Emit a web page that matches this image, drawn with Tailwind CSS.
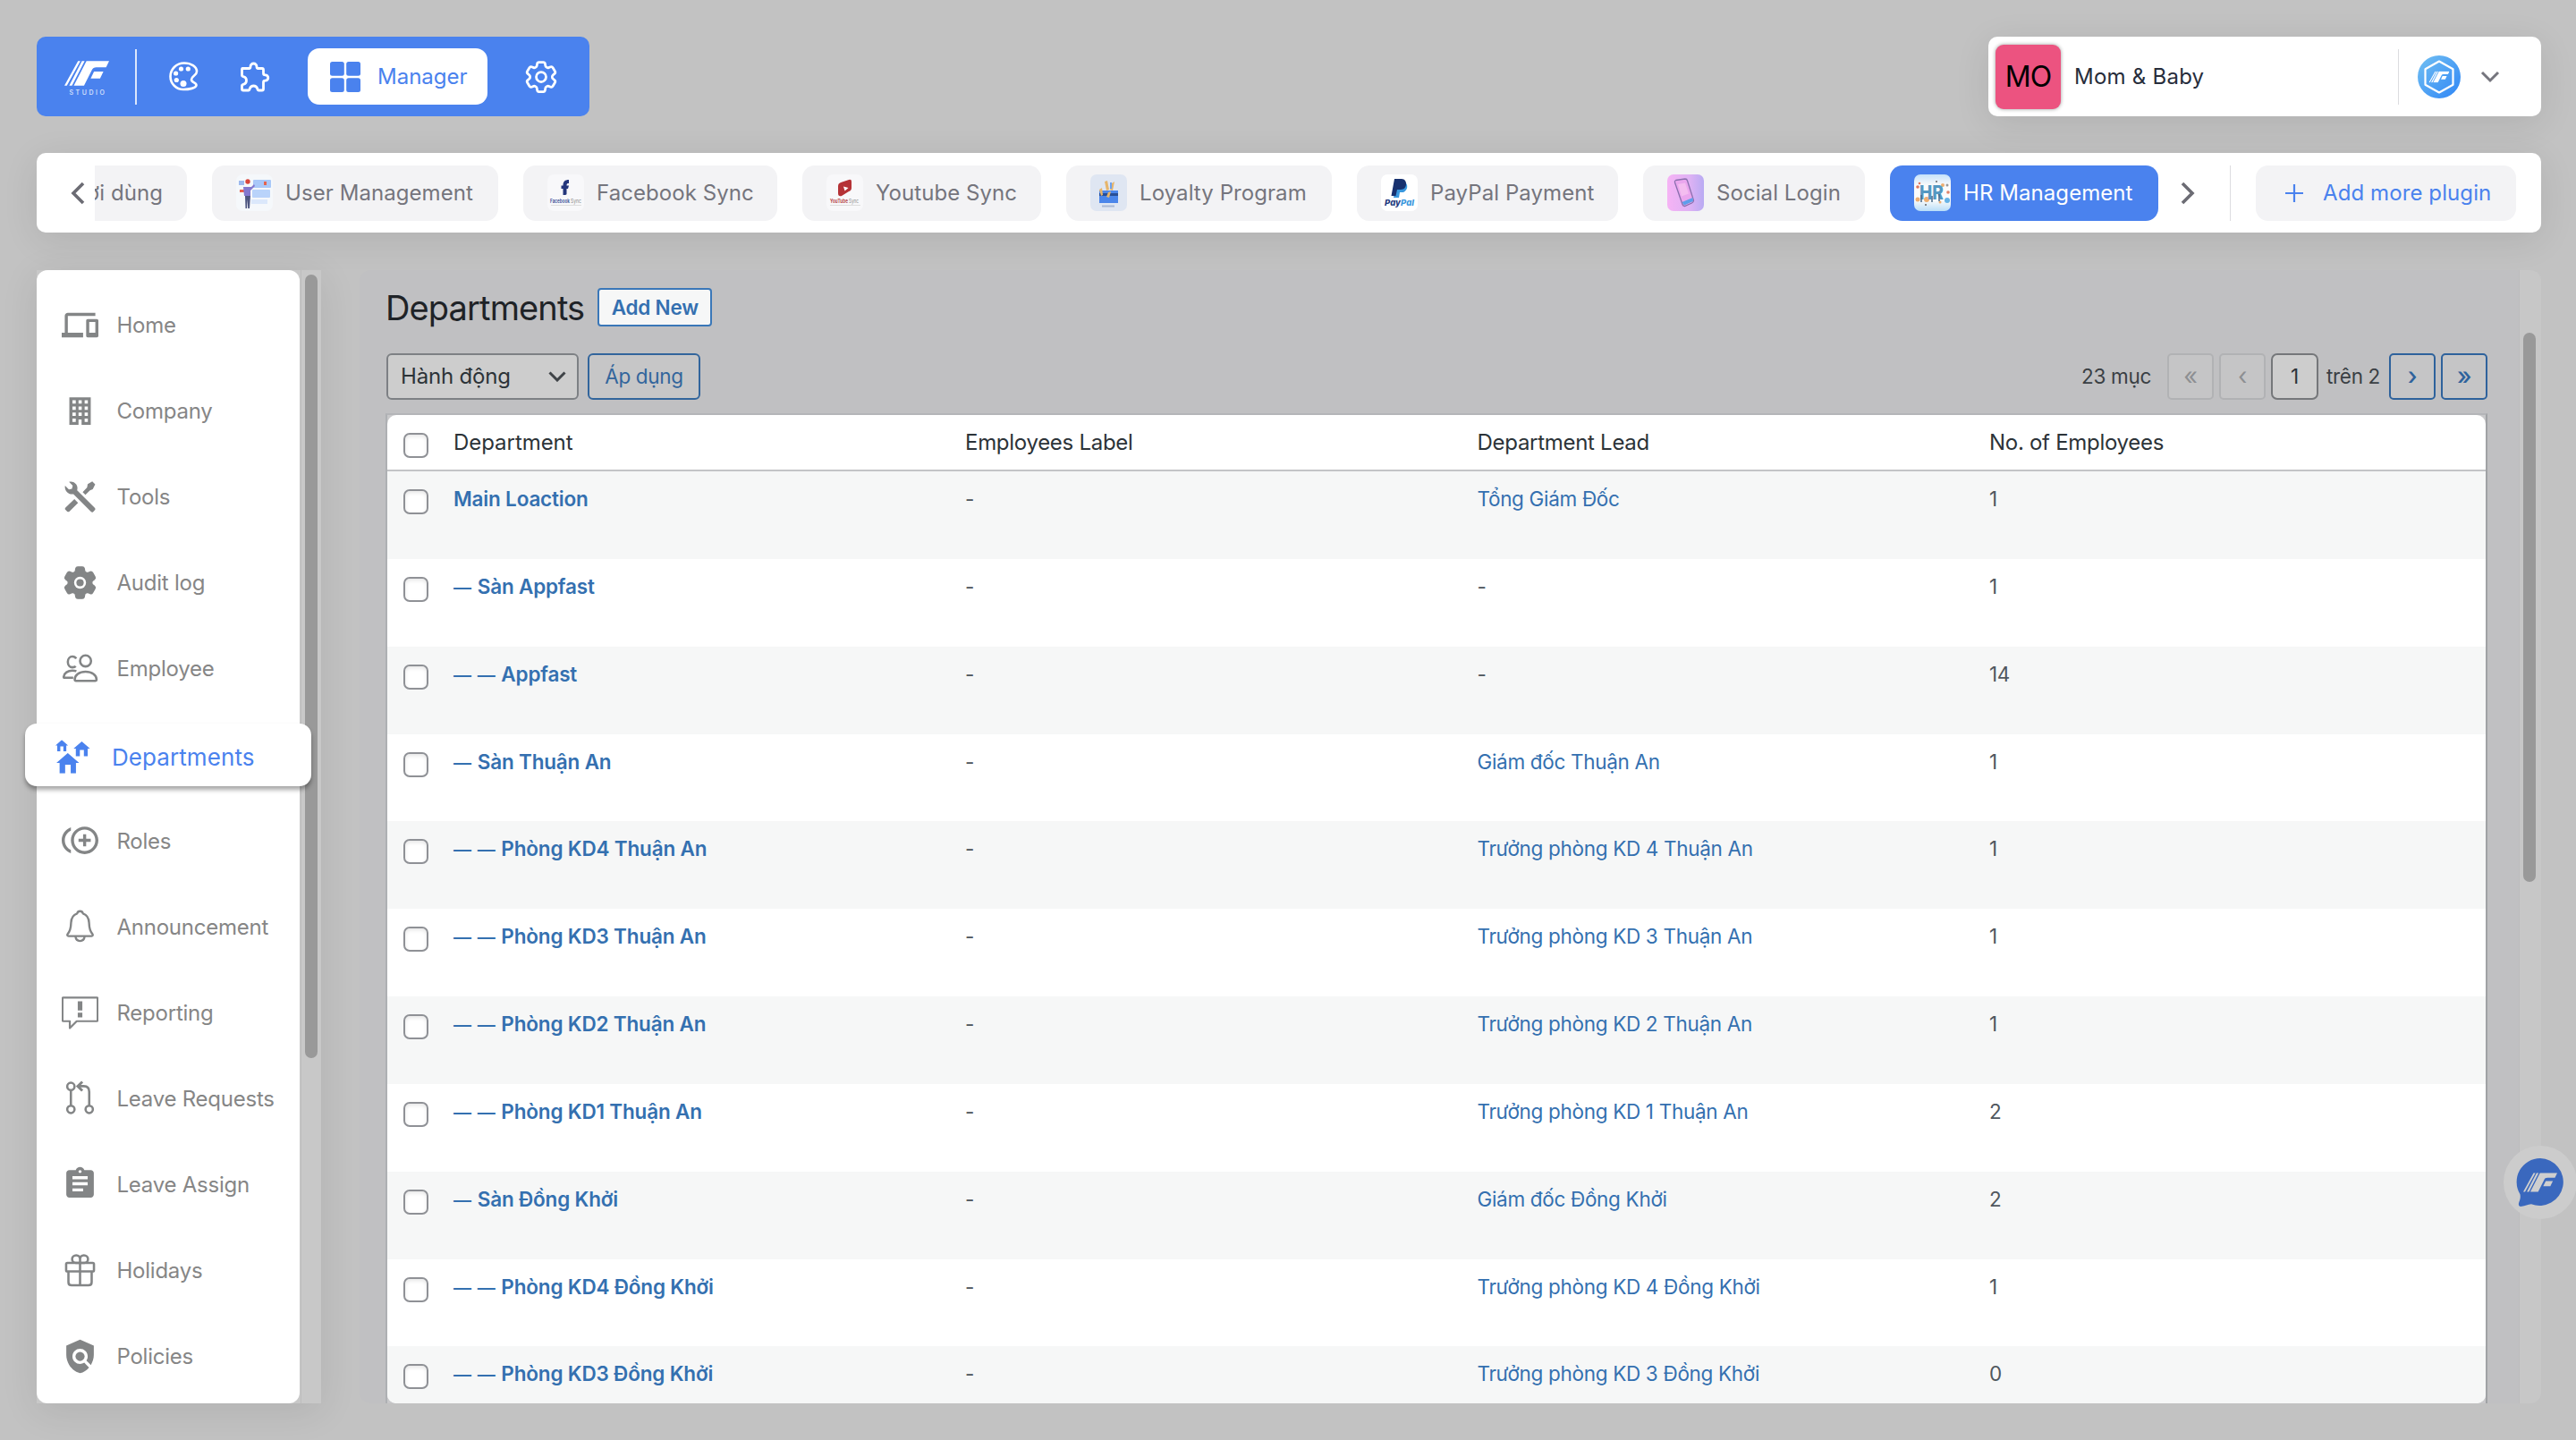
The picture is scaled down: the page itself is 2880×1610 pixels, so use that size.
<!DOCTYPE html>
<html lang="vi">
<head>
<meta charset="utf-8">
<title>Departments</title>
<script src="https://cdn.jsdelivr.net/npm/@tailwindcss/browser@4"></script>
</head>
<body class="relative h-[1610px] w-[2880px] overflow-hidden bg-[#c2c2c2] font-['Inter','Noto_Sans',sans-serif] text-[24px] leading-none text-[#75757d]">

<svg class="hidden">
  <symbol id="logo" viewBox="65 51 148 82">
    <path d="M110 51h8L73 133h-8zM123 51h9L90 133h-9z"/>
    <path d="M138 51h75l-10 21h-32c-8 0-12 3-15 9l-26 52H96z"/>
    <path d="M163 86h31l-11 23h-31z"/>
  </symbol>
  <symbol id="cog" viewBox="0 0 24 24">
    <path d="M9.594 3.94c.09-.542.56-.94 1.11-.94h2.593c.55 0 1.02.398 1.11.94l.213 1.281c.063.374.313.686.645.87.074.04.147.083.22.127.325.196.72.257 1.075.124l1.217-.456a1.125 1.125 0 0 1 1.37.49l1.296 2.247a1.125 1.125 0 0 1-.26 1.431l-1.003.827c-.293.241-.438.613-.43.992a7.723 7.723 0 0 1 0 .255c-.008.378.137.75.43.991l1.004.827c.424.35.534.955.26 1.43l-1.298 2.247a1.125 1.125 0 0 1-1.369.491l-1.217-.456c-.355-.133-.75-.072-1.076.124a6.47 6.47 0 0 1-.22.128c-.331.183-.581.495-.644.869l-.213 1.281c-.09.543-.56.94-1.11.94h-2.594c-.55 0-1.019-.398-1.11-.94l-.213-1.281c-.062-.374-.312-.686-.644-.87a6.52 6.52 0 0 1-.22-.127c-.325-.196-.72-.257-1.076-.124l-1.217.456a1.125 1.125 0 0 1-1.369-.49l-1.297-2.247a1.125 1.125 0 0 1 .26-1.431l1.004-.827c.292-.24.437-.613.43-.991a6.932 6.932 0 0 1 0-.255c.007-.38-.138-.751-.43-.992l-1.004-.827a1.125 1.125 0 0 1-.26-1.43l1.297-2.247a1.125 1.125 0 0 1 1.37-.491l1.216.456c.356.133.751.072 1.076-.124.072-.044.146-.086.22-.128.332-.183.582-.495.644-.869l.214-1.28Z"/>
  </symbol>
  <symbol id="house" viewBox="0 0 78 70"><path d="M39 0 78 34H67V70H49V40H30V70H11V34H0z"/></symbol>
</svg>

<div class="flex h-[1569px] flex-col pt-[41px] pr-[39px] pl-[41px]">

  <!-- Top bar -->
  <header class="flex h-[89px] flex-none items-center justify-between">
    <nav class="flex h-[89px] w-[618px] items-center rounded-[10px] bg-[#4a82ee] text-white">
      <div class="ml-[31px] flex w-[50px] flex-col items-center pt-[4px]">
        <svg class="h-[28px] w-[50px]" fill="#fff"><use href="#logo"/></svg>
        <span class="mt-[4px] pl-[3px] text-[7px] leading-[7px] font-medium tracking-[2.6px] text-white/80">STUDIO</span>
      </div>
      <div class="ml-[29px] h-[62px] w-[2px] bg-white/80"></div>
      <svg class="ml-[35px] h-[36px] w-[36px] flex-none" viewBox="0 0 36 36" fill="none" stroke="#fff" stroke-width="2.6">
        <path d="M18 2.500C9 2.500 2.500 9.500 2.500 17.500s6.500 14.500 14.500 14.500c6.500 0 14-1.500 14.500-4.500.5-3-5.500-3-5.500-6.500 0-4 6-4.500 6-9C32 6.500 25.500 2.500 18 2.500z"/>
        <g fill="#fff" stroke="none"><circle cx="14.500" cy="9" r="2.600"/><circle cx="22.300" cy="9" r="2.600"/><circle cx="8.600" cy="14" r="2.600"/><circle cx="9.300" cy="21.500" r="2.600"/><circle cx="17" cy="25.500" r="3.500"/></g>
      </svg>
      <svg class="ml-[42px] h-[36px] w-[36px] flex-none" viewBox="0 0 36 36" fill="none" stroke="#fff" stroke-width="2.800" stroke-linejoin="round">
        <path d="M5 8.500h7.500c1.500 0 1.500-1 1.500-2 0-2 1.500-3.500 3.500-3.500S21 4.500 21 6.500c0 1 .2 2 1.500 2H27c1 0 1.500.5 1.500 1.500v4c0 1.500 1 1.800 2 1.800 2 0 3.300 1.500 3.300 3.200s-1.300 3.200-3.300 3.200c-1 0-2 .3-2 1.800v7.500c0 1-.5 1.500-1.500 1.500h-4c-1 0-1-1-1.300-2-.7-2-2.200-3-4.200-3s-3.500 1-4.200 3c-.3 1-.3 2-1.300 2H6c-1 0-1.500-.5-1.500-1.500v-4c0-1 1-1 2-1.300 2-.700 3-2.200 3-4.200s-1-3.500-3-4.200c-1-.300-2-.3-2-1.300V10c0-1 .2-1.500.5-1.500z"/>
      </svg>
      <div class="ml-[42px] flex h-[63px] w-[201px] items-center rounded-[13px] bg-white pl-[25px] text-[#4a82ee]">
        <svg class="h-[34px] w-[34px]" viewBox="0 0 34 34" fill="#4a82ee"><rect width="15.800" height="15.800" rx="2.500"/><rect x="18.200" width="15.800" height="15.800" rx="2.500"/><rect y="18.200" width="15.800" height="15.800" rx="2.500"/><rect x="18.200" y="18.200" width="15.800" height="15.800" rx="2.500"/></svg>
        <span class="ml-[19px] pt-px">Manager</span>
      </div>
      <svg class="ml-[38px] h-[44px] w-[44px] flex-none" viewBox="0 0 24 24" fill="none" stroke="#fff" stroke-width="1.500"><use href="#cog"/><circle cx="12" cy="12" r="3"/></svg>
    </nav>

    <div class="flex h-[89px] w-[618px] items-center rounded-[10px] bg-white pl-[8px] shadow-[0_8px_40px_rgba(0,0,0,0.09)]">
      <div class="flex h-[72px] w-[73px] items-center justify-center rounded-[9px] bg-[#ec5380] text-[32px] tracking-[-0.03em] text-black shadow-[0_0_4px_rgba(0,0,0,0.4)]">MO</div>
      <span class="ml-[15px] pt-px tracking-[0.01em] text-[#272d3b]">Mom &amp; Baby</span>
      <div class="ml-auto h-[62px] w-px bg-[#dcdce0]"></div>
      <svg class="ml-[21px] h-[48px] w-[48px]" viewBox="0 0 48 48">
        <defs><linearGradient id="av" x1="0" y1="0" x2="1" y2="1"><stop offset="0" stop-color="#72c0f2"/><stop offset="1" stop-color="#2f86f6"/></linearGradient></defs>
        <circle cx="24" cy="24" r="24" fill="url(#av)"/>
        <path d="M24 6.500 39.500 15.300V32.700L24 41.500 8.500 32.700V15.300z" fill="none" stroke="#fff" stroke-width="2.200" stroke-linejoin="round"/>
        <use href="#logo" x="12.500" y="17.500" width="23" height="13" fill="#fff"/>
      </svg>
      <svg class="mr-[46px] ml-[22px] h-[14px] w-[22px]" viewBox="0 0 22 14" fill="none" stroke="#75757d" stroke-width="3"><path d="m2 2 9 9 9-9"/></svg>
    </div>
  </header>

  <!-- Plugin bar -->
  <section class="mt-[41px] flex h-[89px] w-[2800px] flex-none items-center rounded-[10px] bg-white shadow-[0_8px_40px_rgba(0,0,0,0.09)]">
    <svg class="ml-[38px] h-[26px] w-[16px] flex-none" viewBox="0 0 16 26" fill="none" stroke="#6c6c74" stroke-width="3.600"><path d="M14 2 3 13l11 11"/></svg>
    <div class="ml-[11px] flex h-[62px] w-[2307px] flex-none justify-end gap-[28px] overflow-hidden tracking-[0.003em]">
      <div class="flex flex-none items-center rounded-[14px] bg-[#f3f3f5] px-[27px]"><span class="pt-px whitespace-nowrap">Người dùng</span></div>
      <div class="flex w-[320px] flex-none items-center gap-[14px] rounded-[14px] bg-[#f3f3f5] pl-[27px]">
        <svg class="h-[41px] w-[41px] flex-none" viewBox="0 0 41 41"><rect width="41" height="41" rx="7" fill="#f5f8fb"/><rect x="19" y="6" width="20" height="9" rx="1" fill="#a9c8f8"/><rect x="18" y="17" width="20" height="9" rx="1" fill="#b9d3fa"/><rect x="17" y="28" width="18" height="5" fill="#dbe8fb"/><rect x="3" y="7" width="6" height="5" fill="#9db9ee"/><path d="M4 17h5v3H4z" fill="#e9604f"/><circle cx="13" cy="8" r="2.700" fill="#d8453c"/><path d="M8 14h9l3-3 1 2-5 5v6H9z" fill="#8378cf"/><path d="M10 24h6l-1 14h-1.800l-.5-10L12 38h-1.500z" fill="#4d5580"/><path d="M31 8h3v4h-3z" fill="#e4644f"/></svg>
        <span class="pt-px whitespace-nowrap">User Management</span>
      </div>
      <div class="flex w-[284px] flex-none items-center gap-[14px] rounded-[14px] bg-[#f3f3f5] pl-[27px]">
        <svg class="h-[41px] w-[41px] flex-none" viewBox="0 0 41 41"><rect width="41" height="41" rx="7" fill="#f8f8fa"/><path d="M17.500 23v-7h-2v-3.500h2c0-4.500 2-6.500 6.500-6.500v4c-2 0-2.500.5-2.500 2.500h2.500l-1 3.500h-1.500v6q0 1-2 1t-2 0z" fill="#24367c"/><text x="3" y="32" font-size="6" font-weight="700" fill="#4a5aa0" textLength="22" lengthAdjust="spacingAndGlyphs">Facebook</text><text x="26" y="32" font-size="6" fill="#888" textLength="12" lengthAdjust="spacingAndGlyphs">Sync</text><path d="M4 34.500h34" stroke="#ddd"/></svg>
        <span class="pt-px whitespace-nowrap">Facebook Sync</span>
      </div>
      <div class="flex w-[267px] flex-none items-center gap-[14px] rounded-[14px] bg-[#f3f3f5] pl-[27px]">
        <svg class="h-[41px] w-[41px] flex-none" viewBox="0 0 41 41"><rect width="41" height="41" rx="7" fill="#f8f8fa"/><path d="M13 13q0-3 3-4l9-3q3-1 3 2v7q0 3-3 4l-8 5q-4 1-4-3z" fill="#b53236"/><path d="m19 13.500 5.500 1.500-4 3.500z" fill="#fff"/><text x="4" y="32" font-size="6" font-weight="700" fill="#b7494d" textLength="20" lengthAdjust="spacingAndGlyphs">YouTube</text><text x="25" y="32" font-size="6" fill="#888" textLength="11" lengthAdjust="spacingAndGlyphs">Sync</text><path d="M4 34.500h34" stroke="#ddd"/></svg>
        <span class="pt-px whitespace-nowrap">Youtube Sync</span>
      </div>
      <div class="flex w-[297px] flex-none items-center gap-[14px] rounded-[14px] bg-[#f3f3f5] pl-[27px]">
        <svg class="h-[41px] w-[41px] flex-none" viewBox="0 0 41 41"><rect width="41" height="41" rx="7" fill="#dfe6f2"/><path d="M10 18h21v14H10z" fill="#4b86ea"/><path d="M10 21h21v3H10z" fill="#294f96"/><path d="m16 8 3-1 2 10-3 1zM24 10l3-2-2 10-3-1zM10 17l3-2 1 8-2 1zM20 20l3-1-2 7-3-1z" fill="#e6b56c"/><path d="M22 9h2v7h-2z" fill="#6da1f0"/><path d="M13 35.500h14" stroke="#a9b9d5" stroke-width="2"/></svg>
        <span class="pt-px whitespace-nowrap">Loyalty Program</span>
      </div>
      <div class="flex w-[292px] flex-none items-center gap-[14px] rounded-[14px] bg-[#f3f3f5] pl-[27px]">
        <svg class="h-[41px] w-[41px] flex-none" viewBox="0 0 41 41"><rect width="41" height="41" rx="7" fill="#fff"/><path d="M17 9h9c5 1 4 9-1 11h-4l-1 6h-6z" fill="#3a97dd"/><path d="M15 5h8c7 0 7 12-1 12h-4l-1.500 7H11.500z" fill="#18316f"/><text x="4" y="35" font-size="9.500" font-weight="800" font-style="italic" fill="#243b80" textLength="18" lengthAdjust="spacingAndGlyphs">Pay</text><text x="22" y="35" font-size="9.500" font-weight="800" font-style="italic" fill="#3a97dd" textLength="15" lengthAdjust="spacingAndGlyphs">Pal</text></svg>
        <span class="pt-px whitespace-nowrap">PayPal Payment</span>
      </div>
      <div class="flex w-[248px] flex-none items-center gap-[14px] rounded-[14px] bg-[#f3f3f5] pl-[27px]">
        <svg class="h-[41px] w-[41px] flex-none" viewBox="0 0 41 41"><defs><linearGradient id="sl"><stop offset="0" stop-color="#f6b3f5"/><stop offset=".6" stop-color="#dfb2f4"/><stop offset="1" stop-color="#b9abf3"/></linearGradient></defs><rect width="41" height="41" rx="7" fill="url(#sl)"/><path d="m9.500 6.500 10.500-1.500q2 0 2.500 2l7 22q0 2-2 3l-8 3.500q-2 0-2.500-2L8.500 9q-.5-2 1-2.500z" fill="#eaa6ee" stroke="#8a6fae" stroke-width="1.300"/><path d="m16.500 31 12-5 .5 4-10 4.500z" fill="#5f9eea"/><path d="m12 11 8-1.500 4 12-8 3z" fill="#f4bdf0"/></svg>
        <span class="pt-px whitespace-nowrap">Social Login</span>
      </div>
      <div class="flex w-[300px] flex-none items-center gap-[14px] rounded-[14px] bg-[#4a82ee] pl-[27px] text-white">
        <svg class="h-[41px] w-[41px] flex-none" viewBox="0 0 41 41"><defs><linearGradient id="hr" x1="0" y1="0" x2="0" y2="1"><stop offset="0" stop-color="#c6e2fa"/><stop offset=".3" stop-color="#fbfbfb"/><stop offset=".7" stop-color="#fbfbfb"/><stop offset="1" stop-color="#b8ddf8"/></linearGradient></defs><rect width="41" height="41" rx="7" fill="url(#hr)"/><g fill="#ecae72"><circle cx="4" cy="28" r="2.500"/><circle cx="14" cy="28" r="3"/><circle cx="32" cy="12" r="2"/><circle cx="38" cy="20" r="1.800" fill="#e0846a"/><circle cx="4" cy="14" r="1.800" fill="#e0745a"/><circle cx="6" cy="10" r="1.300" fill="#e0745a"/><circle cx="29" cy="31" r="1.500"/><circle cx="37" cy="29" r="3" fill="#65b3e6"/><circle cx="25" cy="8" r="1" fill="#666"/><circle cx="13" cy="34" r="1" fill="#666"/><circle cx="37" cy="12" r="1.500" fill="#999"/></g><text x="6" y="28" font-size="21" font-weight="800" fill="#5498c2" textLength="27" lengthAdjust="spacingAndGlyphs">HR</text><path d="M8 23v8M20 24v7M28 22v8" stroke="#466a8a" stroke-width="1.500"/></svg>
        <span class="pt-px whitespace-nowrap">HR Management</span>
      </div>
    </div>
    <svg class="ml-[25px] h-[26px] w-[16px] flex-none" viewBox="0 0 16 26" fill="none" stroke="#6c6c74" stroke-width="3.600"><path d="m2 2 11 11L2 24"/></svg>
    <div class="ml-[39px] h-[62px] w-px bg-[#dcdce0]"></div>
    <div class="ml-[28px] flex h-[62px] w-[291px] items-center rounded-[14px] bg-[#f3f3f5] pl-[33px] text-[#4a82ee]">
      <svg class="h-[20px] w-[20px] flex-none" viewBox="0 0 20 20" stroke="#4a82ee" stroke-width="2.200"><path d="M0 10h20M10 0v20"/></svg>
      <span class="ml-[22px] pt-px whitespace-nowrap tracking-[0.004em]">Add more plugin</span>
    </div>
  </section>

  <div class="mt-[42px] flex h-[1267px] flex-none">

    <!-- Sidebar -->
    <aside class="flex h-[1267px] w-[318px] flex-none bg-[#c8c8c8] shadow-[0_8px_40px_rgba(0,0,0,0.09)]">
      <ul id="menu" class="relative z-10 flex h-[1267px] w-[294px] flex-none flex-col rounded-[12px] bg-white pt-[13px] tracking-[-0.01em] text-[#868686]"></ul>
      <div class="ml-px w-[23px] border-l border-[#bdbdbd] pt-[5px] pl-[4px]"><div class="h-[876px] w-[14px] rounded-full bg-[#999]"></div></div>
    </aside>

    <!-- Departments panel -->
    <main class="ml-[43px] flex h-[1267px] w-[2439px] flex-none overflow-hidden rounded-[12px] bg-[#c0c0c2]">
      <div class="w-[2414px] flex-none overflow-hidden pl-[29px] text-[22.5px] tracking-[-0.014em]">
        <div class="flex h-[83px] items-center">
          <h1 class="text-[38px] tracking-[-0.023em] text-[#1f2327]">Departments</h1>
          <button class="ml-[15px] h-[43px] w-[128px] rounded-[4px] border-2 border-[#3a77b8] bg-[#f6f7f7] pt-px text-[22.5px] font-semibold tracking-[-0.01em] text-[#3470b0]">Add New</button>
        </div>
        <div class="mt-[10px] flex h-[52px] w-[2350px] items-center text-[#3a3f44]">
          <div class="ml-px flex h-[52px] w-[215px] items-center justify-between rounded-[6px] border-2 border-[#7d8084] bg-[#cdcdcd] pr-[12px] pl-[14px] text-[24px] tracking-[-0.008em] text-[#2c3338]">Hành động<svg class="h-[12px] w-[20px]" viewBox="0 0 20 12" fill="none" stroke="#3f4347" stroke-width="3"><path d="m1.500 1.500 8.500 8.500 8.500-8.500"/></svg></div>
          <button class="ml-[10px] h-[52px] w-[126px] rounded-[6px] border-2 border-[#32659c] bg-[#c6c6c7] pt-px text-[22.500px] text-[#32659c]">Áp dụng</button>
          <span class="ml-auto pt-px">23 mục</span>
          <span class="ml-[18px] flex h-[52px] w-[52px] items-center justify-center rounded-[5px] border-2 border-[#b1b2b4] bg-[#c5c5c6] pb-[2px] text-[27px] text-[#8d8f92]">«</span>
          <span class="ml-[6px] flex h-[52px] w-[52px] items-center justify-center rounded-[5px] border-2 border-[#b1b2b4] bg-[#c5c5c6] pb-[2px] text-[27px] text-[#8d8f92]">‹</span>
          <span class="ml-[6px] flex h-[52px] w-[53px] items-center justify-center rounded-[7px] border-2 border-[#75777a] bg-[#cdcdcd] pt-px text-[#2c3338]">1</span>
          <span class="ml-[9px] w-[62px] pt-px whitespace-nowrap">trên 2</span>
          <span class="ml-[8px] flex h-[52px] w-[52px] items-center justify-center rounded-[5px] border-2 border-[#2e629c] bg-[#c5c5c6] pb-[2px] text-[27px] font-medium text-[#2e629c]">›</span>
          <span class="ml-[6px] flex h-[52px] w-[52px] items-center justify-center rounded-[5px] border-2 border-[#2e629c] bg-[#c5c5c6] pb-[2px] text-[27px] font-medium text-[#2e629c]">»</span>
        </div>
        <div class="mt-[15px] h-[1107px] w-[2350px] border-2 border-b-0 border-t-[#b4b5b8] border-r-[#a0a2a5] border-l-[#aeb0b3] bg-[#c8c8ca]">
          <div class="h-full overflow-hidden rounded-[10px] bg-white">
            <div class="flex h-[63px] border-b-2 border-[#c3c4c7] pl-[18px] text-[24px] tracking-[-0.012em] text-[#2c3338]">
              <div class="mt-[20px] h-[28px] w-[28px] flex-none rounded-[7px] border-2 border-[#8f9196] bg-white shadow-[inset_0_2px_4px_rgba(0,0,0,0.1)]"></div>
              <div class="ml-[28px] w-[572px] flex-none pt-[19px] tracking-[-0.002em]">Department</div>
              <div class="w-[572.5px] flex-none pt-[19px]">Employees Label</div>
              <div class="w-[572.5px] flex-none pt-[19px]">Department Lead</div>
              <div class="pt-[19px]">No. of Employees</div>
            </div>
            <div id="rows"></div>
          </div>
        </div>
      </div>
      <div class="w-[25px] flex-none border-l border-[#bcbcbd] bg-[#c7c7c7] pt-[70px] pl-[4px]"><div class="h-[614px] w-[14px] rounded-full bg-[#999]"></div></div>
    </main>
  </div>
</div>

<!-- Chat launcher -->
<div class="absolute top-[1281px] left-[2799px] flex h-[82px] w-[82px] items-center justify-center rounded-full bg-[#cccccc]">
  <svg class="h-[56px] w-[54px]" viewBox="0 0 54 56"><path d="M27 1a26.500 26.500 0 1 1-10 51.300c-4 .5-7 2-10.500 2.500-3 .5-4-1-3.500-3.500.7-3 2.500-5 1.500-10A26.500 26.500 0 0 1 27 1z" fill="#3a68be"/><use href="#logo" x="8" y="17" width="38" height="22" fill="#cfcfcf"/></svg>
</div>

<script>
  const icons = {
    home: '<path d="M4 6h18V4H4c-1.100 0-2 .9-2 2v11H0v3h14v-3H4V6zm19 2h-6c-.550 0-1 .450-1 1v10c0 .55.45 1 1 1h6c.55 0 1-.45 1-1V9c0-.55-.45-1-1-1zm-1 9h-4v-7h4v7z"/>',
    company: '<path fill-rule="evenodd" d="M5 3h14v18h-6v-3.500h-2V21H5zM7 5v2.200h2.200V5zm4 0v2.200h2.100V5zm4 0v2.200h2.100V5zM7 9v2.200h2.200V9zm4 0v2.200h2.100V9zm4 0v2.200h2.100V9zM7 13v2.200h2.200V13zm4 0v2.200h2.100V13zm4 0v2.200h2.100V13zM7 17v2.200h2.200V17zm8 0v2.200h2.100V17z"/>',
    tools: '<path d="M4.800 2.200C6.500 1.700 8.500 2.300 9.600 4c.8 1.300.8 2.600.5 3.700L21.600 19.200c.5.5.5 1 .1 1.500l-1.100 1.100c-.5.500-1 .4-1.500-.1L7.700 10.200c-1.300.3-2.800 0-3.900-1C2.300 8 1.900 6.300 2.200 4.700l2.500 2.500 2-.5.500-2z"/><path d="m17 3.600 3-1.700 1.900 1.900L20.300 7l-1.800.7-3 3-1.800-1.800 2.900-3z"/><path d="m8.300 13.500 2.400 2.400-5.600 5.600c-.5.5-1.100.5-1.600 0l-1-1c-.5-.5-.5-1 0-1.500z"/>',
    audit: '<g transform="translate(-1.800 -1.800) scale(1.150)" stroke="currentColor" stroke-width=".7"><use href="#cog"/></g><circle cx="12" cy="12" r="3.900" fill="#fff"/><circle cx="12" cy="12" r="2.400"/>',
    employee: '<g fill="none" stroke="currentColor" stroke-width="1.500"><circle cx="15.600" cy="7" r="3.600"/><path d="M8.500 19.300c0-3 3-5.300 7.100-5.300s7.200 2.300 7.200 5.300c0 .4-.3.700-.7.700H9.200c-.4 0-.7-.300-.7-.700z"/><path d="M9.200 10.500C8.700 11 8 11.200 7 11.200c-1.700 0-3-1.600-3-3.600s1.300-3.500 3-3.500c1.200 0 2 .5 2.500 1.400M7.500 18H1.800c-.400 0-.6-.3-.5-.7.3-2.300 2.700-4 5.700-4 1 0 1.800.1 2.600.4"/></g>',
    roles: '<path d="M16 8h-2v3h-3v2h3v3h2v-3h3v-2h-3zM2 12c0-2.790 1.640-5.200 4.010-6.320V3.520C2.520 4.760 0 8.090 0 12s2.520 7.240 6.010 8.480v-2.160C3.640 17.200 2 14.790 2 12zm13-9c-4.960 0-9 4.040-9 9s4.040 9 9 9 9-4.040 9-9-4.040-9-9-9zm0 16c-3.860 0-7-3.140-7-7s3.140-7 7-7 7 3.140 7 7-3.140 7-7 7z"/>',
    announcement: '<g fill="none" stroke="currentColor" stroke-width="1.400" stroke-linejoin="round"><path d="M12 2.200c-1 0-1.700.7-1.900 1.500C7.500 4.600 6.200 7 6.100 9.800c-.1 3.500-.6 5.500-2.200 7.300-.5.700-.2 1.400.6 1.400h15c.8 0 1.100-.7.600-1.400-1.600-1.800-2.100-3.800-2.200-7.300-.1-2.800-1.400-5.200-4-6.100-.2-.8-.9-1.500-1.900-1.500z"/><path d="M9 18.700c.2 1.800 1.400 3 3 3s2.800-1.200 3-3"/></g>',
    reporting: '<path fill="none" stroke="currentColor" stroke-width="1.300" stroke-linejoin="round" d="M1 2.500h22c.3 0 .5.200.5.500v14.500c0 .3-.2.500-.5.500H9.800L5.300 22.500V18H1c-.3 0-.5-.2-.5-.5V3c0-.3.200-.5.5-.5z"/><path d="M10.500 5h3v6h-3zM10.500 12.500h3v3h-3z"/>',
    requests: '<g fill="none" stroke="currentColor" stroke-width="1.500"><circle cx="6" cy="4.500" r="2.400"/><circle cx="6" cy="19.500" r="2.400"/><circle cx="18" cy="19.500" r="2.400"/><path d="M6 7v10M18 17V8c0-2.300-1.200-3.700-3.500-3.700h-4"/><path stroke-width="1.700" d="m13.500 1.500-3 2.900 3 2.900"/></g>',
    assign: '<path d="M19 3h-4.180C14.400 1.840 13.300 1 12 1c-1.300 0-2.400.84-2.820 2H5c-1.100 0-2 .9-2 2v14c0 1.100.9 2 2 2h14c1.100 0 2-.9 2-2V5c0-1.100-.9-2-2-2zm-7 0c.55 0 1 .45 1 1s-.45 1-1 1-1-.45-1-1 .45-1 1-1zm2 14H7v-2h7v2zm3-4H7v-2h10v2zm0-4H7V7h10v2z"/>',
    holidays: '<g fill="none" stroke="currentColor" stroke-width="1.500" stroke-linejoin="round"><rect x="2.900" y="7" width="18.200" height="5.600" rx=".8"/><path d="M4.400 12.600v7c0 1.300.8 2.100 2.100 2.100h11c1.300 0 2.100-.8 2.100-2.100v-7M12 4.600v17M12 7V4.600c0-1.500-1-2.600-2.500-2.600S6.800 3.100 6.800 4.500 7.800 7 9.200 7zM12 7V4.600C12 3.100 13 2 14.500 2s2.700 1.100 2.700 2.500S16.200 7 14.800 7z"/></g>',
    policies: '<path d="M21 5l-9-4-9 4v6c0 5.550 3.840 10.740 9 12 2.300-.56 4.330-1.900 5.880-3.710l-3.120-3.120c-1.940 1.290-4.580 1.070-6.290-.64-1.950-1.950-1.950-5.120 0-7.070 1.950-1.950 5.120-1.950 7.070 0 1.710 1.710 1.920 4.350.64 6.290l2.900 2.900C20.290 15.690 21 13.380 21 11V5z"/><circle cx="12" cy="12" r="3"/>'
  };
  const menu = [['Home','home'],['Company','company'],['Tools','tools'],['Audit log','audit'],['Employee','employee'],['Departments'],['Roles','roles'],['Announcement','announcement'],['Reporting','reporting'],['Leave Requests','requests'],['Leave Assign','assign'],['Holidays','holidays'],['Policies','policies']];
  document.getElementById('menu').innerHTML = menu.map(([label, icon]) => icon
    ? `<li class="flex h-[96.1px] flex-none items-center pl-[27.5px]"><svg class="h-[41px] w-[41px] flex-none text-[#838586]" viewBox="0 0 24 24" fill="currentColor">${icons[icon]}</svg><span class="ml-[21px] pt-[2px] whitespace-nowrap">${label}</span></li>`
    : `<li class="flex h-[96.1px] flex-none items-center"><div class="-mx-[13px] flex h-[70px] w-[320px] flex-none items-center rounded-[13px] bg-white pl-[34px] shadow-[0_4px_5px_rgba(0,0,0,0.35)]"><svg class="mt-[5px] h-[38px] w-[39px] flex-none" viewBox="0 0 116 112" fill="#4a82ee"><use href="#house" x="0" y="0" width="42" height="38"/><use href="#house" x="60" y="4" width="55" height="52"/><use href="#house" x="2" y="44" width="78" height="68"/></svg><span class="ml-[24px] pt-[7px] text-[26px] tracking-[0.003em] text-[#4a82ee]">${label}</span></div></li>`).join('');

  const rows = [
    ['','Main Loaction','Tổng Giám Đốc',1],
    ['—','Sàn Appfast','-',1],
    ['— —','Appfast','-',14],
    ['—','Sàn Thuận An','Giám đốc Thuận An',1],
    ['— —','Phòng KD4 Thuận An','Trưởng phòng KD 4 Thuận An',1],
    ['— —','Phòng KD3 Thuận An','Trưởng phòng KD 3 Thuận An',1],
    ['— —','Phòng KD2 Thuận An','Trưởng phòng KD 2 Thuận An',1],
    ['— —','Phòng KD1 Thuận An','Trưởng phòng KD 1 Thuận An',2],
    ['—','Sàn Đồng Khởi','Giám đốc Đồng Khởi',2],
    ['— —','Phòng KD4 Đồng Khởi','Trưởng phòng KD 4 Đồng Khởi',1],
    ['— —','Phòng KD3 Đồng Khởi','Trưởng phòng KD 3 Đồng Khởi',0]
  ];
  document.getElementById('rows').innerHTML = rows.map(([indent, name, lead, n]) => `
    <div class="flex h-[97.85px] pl-[18px] text-[#50575e] odd:bg-[#f6f7f7]">
      <div class="mt-[20px] h-[28px] w-[28px] flex-none rounded-[7px] border-2 border-[#8f9196] bg-white shadow-[inset_0_2px_4px_rgba(0,0,0,0.1)]"></div>
      <div class="ml-[28px] w-[572px] flex-none pt-[20px] font-semibold tracking-[-0.008em] text-[#3470b0]">${indent ? `<span class="text-[20px] leading-[20px] [word-spacing:2px]">${indent} </span>` : ''}${name}</div>
      <div class="w-[572.5px] flex-none pt-[20px]">-</div>
      <div class="w-[572.5px] flex-none pt-[20px] ${lead === '-' ? '' : 'text-[#3470b0]'}">${lead}</div>
      <div class="pt-[20px]">${n}</div>
    </div>`).join('');
</script>
</body>
</html>
